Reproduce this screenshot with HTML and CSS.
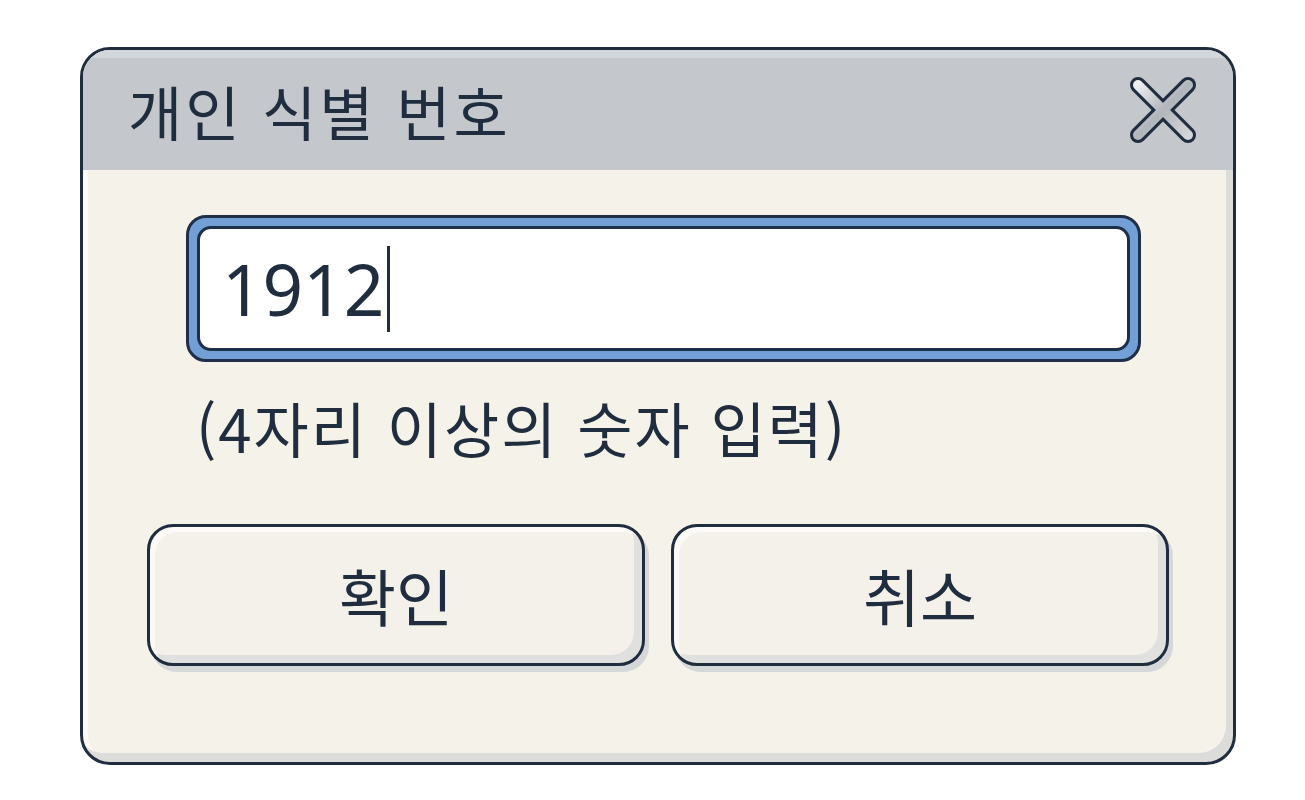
FILE: index.html
```html
<!DOCTYPE html>
<html lang="ko">
  <head>
    <meta charset="UTF-8" />
    <meta name="viewport" content="width=device-width, initial-scale=1.0" />
    <title>개인 식별 번호</title>
    <link rel="stylesheet" href="styles.css">
  </head>
  <body>
    <div class="dialog">
      <header class="title-bar">
        <h1 class="title">개인 식별 번호</h1>
        <button class="close-btn" aria-label="닫기">
          <svg width="68" height="68" viewBox="0 0 68 68">
            <defs>
              <linearGradient id="xShade" x1="0" y1="0" x2="1" y2="1">
                <stop offset="0" stop-color="#eceef0" />
                <stop offset="0.5" stop-color="#b1b6bc" />
                <stop offset="1" stop-color="#d2d6da" />
              </linearGradient>
            </defs>
            <g stroke-linecap="round">
              <line x1="9" y1="9" x2="59" y2="59" stroke="#1f2d3f" stroke-width="16" />
              <line x1="59" y1="9" x2="9" y2="59" stroke="#1f2d3f" stroke-width="16" />
              <line x1="9" y1="9" x2="59" y2="59" stroke="url(#xShade)" stroke-width="10" />
              <line x1="59" y1="9" x2="9" y2="59" stroke="url(#xShade)" stroke-width="10" />
            </g>
          </svg>
        </button>
      </header>

      <main class="dialog-body">
        <div class="field">
          <div class="field-inner">
            <span class="field-value">1912</span><span class="caret"></span>
          </div>
        </div>
        <p class="hint">(4자리 이상의 숫자 입력)</p>
        <div class="actions">
          <button class="btn">확인</button>
          <button class="btn">취소</button>
        </div>
      </main>
    </div>
  </body>
</html>
```

FILE: styles.css
```css
body {
  margin: 0;
  padding: 0;
  background-color: #fff;
  color: #1f2d3f;
  font-family: "Noto Sans CJK KR", "Noto Sans", sans-serif;
}
.dialog {
  box-sizing: border-box;
  width: 1156px;
  height: 718px;
  margin: 47px 0 0 80px;
  border: 3px solid #1f2d3f;
  border-radius: 30px;
  background-color: #f5f2ea;
  box-shadow: inset -7px -9px 0 #dcdcdb, inset 5px 0 0 #fbfaf6;
  overflow: hidden;
  display: flex;
  flex-direction: column;
}
.title-bar {
  height: 120px;
  display: flex;
  align-items: center;
  justify-content: space-between;
  padding: 0 36px 0 45px;
  background-color: #c4c8cd;
  box-shadow: inset 0 8px 0 #d3d6da;
}
.title {
  margin: 0;
  font-size: 59px;
  font-weight: 400;
  letter-spacing: 3px;
  color: #1f2d3f;
}
.close-btn {
  border: none;
  background: none;
  padding: 0;
  width: 68px;
  height: 68px;
  cursor: pointer;
}
.dialog-body {
  flex-grow: 1;
  padding: 45px 64px 0;
}
.field {
  margin: 0 28px 0 39px;
  height: 147px;
  box-sizing: border-box;
  border: 3px solid #1f2f48;
  border-radius: 20px;
  padding: 8px;
  background-color: #72a0d6;
}
.field-inner {
  box-sizing: border-box;
  height: 100%;
  border: 3px solid #1f2f48;
  border-radius: 14px;
  background-color: #fff;
  display: flex;
  align-items: center;
  padding-left: 22px;
}
.field-value {
  font-family: "Noto Sans", "Noto Sans CJK KR", sans-serif;
  font-size: 71px;
  line-height: 1;
  color: #1f2d3f;
}
.caret {
  display: inline-block;
  width: 3px;
  height: 86px;
  margin-left: 3px;
  background-color: #1f2d3f;
}
.hint {
  margin: 26px 0 0 49px;
  font-size: 60px;
  font-weight: 400;
  letter-spacing: 2px;
  line-height: 1.3;
  color: #1f2d3f;
}
.actions {
  display: flex;
  gap: 26px;
  margin-top: 58px;
}
.btn {
  flex: 1;
  height: 142px;
  border: 3px solid #1f2d3f;
  border-radius: 26px;
  background-color: #f4f1ea;
  box-shadow: 4px 6px 0 #d6d7d8, inset 5px 5px 0 #fbfaf7, inset -8px -8px 0 #e0e0de;
  font-family: "Noto Sans CJK KR", sans-serif;
  font-size: 62px;
  font-weight: 400;
  color: #1f2d3f;
  cursor: pointer;
}
```
